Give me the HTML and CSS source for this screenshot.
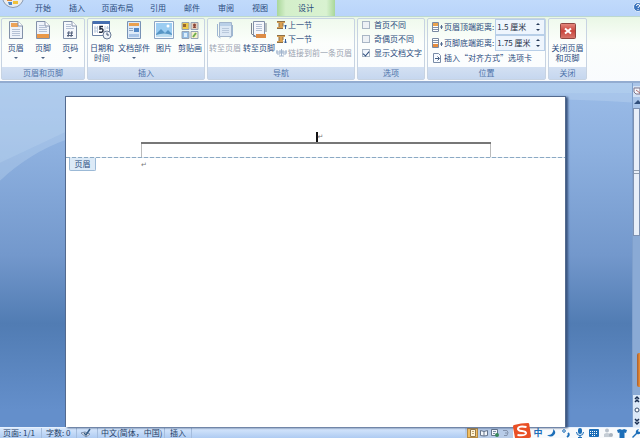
FILE: index.html
```html
<!DOCTYPE html>
<html lang="zh-CN">
<head>
<meta charset="utf-8">
<title>文档</title>
<link rel="stylesheet" href="styles.css">
</head>
<body>
<header class="tabs">
  <button class="office" aria-label="Office">
    <svg width="22" height="22" viewBox="0 0 22 22"><circle cx="11" cy="11" r="10.5" fill="#e9ecef" stroke="#8999b0"/><path d="M5 9l5-1v7H5z" fill="#e38a2e"/><path d="M11 8h5v6h-5z" fill="#79b043"/><path d="M6 16h4v3H7z" fill="#4b86c9"/><path d="M11 15h5v3h-5z" fill="#f0c23b"/></svg>
  </button>
  <nav class="tab-list">
    <button class="tab">开始</button>
    <button class="tab">插入</button>
    <button class="tab tab-wide">页面布局</button>
    <button class="tab">引用</button>
    <button class="tab">邮件</button>
    <button class="tab">审阅</button>
    <button class="tab">视图</button>
    <button class="tab tab-active">设计</button>
  </nav>
  <button class="help" aria-label="帮助">
    <svg width="10" height="10" viewBox="0 0 10 10"><circle cx="5" cy="5" r="4.5" fill="#3c74bd" stroke="#e5effb"/><path d="M3.5 4q0-1.6 1.6-1.6T6.6 4Q6.500 5 5 5.500V6M5 7v1" fill="none" stroke="#fff"/></svg>
  </button>
</header>

<main class="ribbon">
  <section class="group g-header">
    <div class="items">
      <button class="big"><svg width="16" height="20" viewBox="0 0 16 20"><path d="M1.500 1.500H10L14.500 6v12.500h-13z" fill="#eef3fa" stroke="#8291a9"/><path d="M3 3h7v4H3z" fill="#eca45a"/><path d="M10 1.500V6h4.500" fill="#fff" stroke="#8291a9"/><path d="M4 9.500h8M4 11.500h8M4 13.500h8M4 15.500h8" stroke="#b4c1d5"/></svg><span>页眉</span><i class="arrow"></i></button>
      <button class="big"><svg width="16" height="20" viewBox="0 0 16 20"><path d="M1.500 1.500H10L14.500 6v12.500h-13z" fill="#eef3fa" stroke="#8291a9"/><path d="M10 1.500V6h4.500" fill="#fff" stroke="#8291a9"/><path d="M4 5.500h5M4 7.500h8M4 9.500h8M4 11.500h8" stroke="#b4c1d5"/><path d="M2 14h12v4H2z" fill="#e99848"/></svg><span>页脚</span><i class="arrow"></i></button>
      <button class="big"><svg width="16" height="20" viewBox="0 0 16 20"><path d="M1.500 1.500H10L14.500 6v12.500h-13z" fill="#f5f8fc" stroke="#8291a9"/><path d="M10 1.500V6h4.500" fill="#fff" stroke="#8291a9"/><path d="M4 4.500h5M4 6.500h5M4 8.500h8" stroke="#b4c1d5"/><path d="M7 11l-1 6m4-6-1 6M5 13h6M5 15.500h6" stroke="#53617b"/></svg><span>页码</span><i class="arrow"></i></button>
    </div>
    <h2>页眉和页脚</h2>
  </section>

  <section class="group g-insert">
    <div class="items">
      <button class="big"><svg width="20" height="20" viewBox="0 0 20 20"><path d="M.5 1.500h17v14H.5z" fill="#fff" stroke="#6d83a5"/><path d="M1 1h17v3H1z" fill="#466fb0"/><path d="M3 6v7M5.500 6v7M13 6v7M15.500 6v3M2 8h3m9 0h3M2 11h3" stroke="#bccbdd"/><path d="M11 6.500H8V9q3-1 3 1.500T7 12" fill="none" stroke="#202b40" stroke-width="1.500"/><circle cx="15" cy="15" r="4" fill="#eef3f9" stroke="#687a96"/><path d="M15 12.500V15h2" fill="none" stroke="#425474"/></svg><span>日期和<br>时间</span></button>
      <button class="big"><svg width="16" height="20" viewBox="0 0 16 20"><path d="M1.500 1.500h13v17h-13z" fill="#dce9f8" stroke="#7792b5"/><path d="M3 3h10v3H3z" fill="#e9a04e"/><path d="M3 8.500h4M3 10.500h4" stroke="#8ea4c1"/><path d="M8 8h5v4H8z" fill="#5287c5"/><path d="M3 14h10v3H3z" fill="#a8c4e7"/></svg><span>文档部件</span><i class="arrow"></i></button>
      <button class="big"><svg width="20" height="20" viewBox="0 0 20 20"><path d="M.5 1.500h19v17H.5z" fill="#f7fbff" stroke="#8ca4c2"/><path d="M2 3h16v14H2z" fill="#9bcdf2"/><path d="M2 14l5-5 4 4 3-3 4 4v3H2z" fill="#5796c5"/><path d="M2 15q8-3 16 0v2H2z" fill="#bdddf0"/><circle cx="14" cy="6" r="1.500" fill="#fff"/></svg><span>图片</span></button>
      <button class="big"><svg width="18" height="20" viewBox="0 0 18 20"><g stroke="#94a2b5"><path d="M1 2.500h7v7H1z" fill="#ecc94a"/><path d="M10 2.500h7v7h-7z" fill="#e3cfbd"/><path d="M1 11.500h7v7H1z" fill="#92bde5"/><path d="M10 11.500h7v7h-7z" fill="#f5f0cc"/></g><path d="M2 4h3v3H2z" fill="#9a662b"/><path d="M12 8q0-2 1.500-2T15 8z" fill="#8b4436"/><circle cx="13.500" cy="5" r="1.500" fill="#8b4436"/><path d="M3 13h3v4H3z" fill="#dceefb"/><path d="M12 17l3-4" stroke="#6fae4a" stroke-width="2"/></svg><span>剪贴画</span></button>
    </div>
    <h2>插入</h2>
  </section>

  <section class="group g-nav">
    <div class="items">
      <button class="big" disabled><svg width="18" height="20" viewBox="0 0 18 20"><path d="M3.500 2.500h12v14h-12z" fill="#dce8f5" stroke="#a2b5cc"/><path d="M4 3h11v3H4z" fill="#bad0e8"/><path d="M6 8.500h7M6 10.500h7M6 12.500h7" stroke="#b8c8dc"/><path d="M1.500 4v12l3 2M16.500 5v11l-3 2" fill="none" stroke="#9db6d2"/></svg><span>转至页眉</span></button>
      <button class="big"><svg width="18" height="20" viewBox="0 0 18 20"><path d="M3.500 1.500h11v15h-11z" fill="#f5f7fb" stroke="#8291a9"/><path d="M6 4.500h6M6 6.500h6M6 8.500h6M6 10.500h6" stroke="#b4c1d5"/><path d="M6 14h10v4H6z" fill="#dc8b45"/><path d="M1.500 3v11l4 2M16 3v9" fill="none" stroke="#7c8491"/></svg><span>转至页脚</span></button>
      <div class="stack">
        <button class="small"><svg width="11" height="10" viewBox="0 0 11 10"><path d="M1 1h8v2H1zM3 3h4v4H3zM1 7h6v2H1z" fill="#dba252"/><path d="M1 1.500h8M3 3v4M7 3v3M1 8.500h6" stroke="#8c6f46"/><path d="M9.500 9V5M8 6.500L9.500 5 11 6.500" stroke="#315b9a" fill="none"/></svg>上一节</button>
        <button class="small"><svg width="11" height="10" viewBox="0 0 11 10"><path d="M1 1h8v2H1zM3 3h4v4H3zM1 7h6v2H1z" fill="#dba252"/><path d="M1 1.500h8M3 3v4M7 3v3M1 8.500h6" stroke="#8c6f46"/><path d="M9.500 5v4M8 7.500L9.500 9 11 7.500" stroke="#315b9a" fill="none"/></svg>下一节</button>
        <button class="small" disabled><svg width="11" height="10" viewBox="0 0 11 10"><path d="M1 2v4h3V2M7 2v4h3V2M0 4h11M3 8h5M5.500 1v7" fill="none" stroke="#a1b4cd"/></svg>链接到前一条页眉</button>
      </div>
    </div>
    <h2>导航</h2>
  </section>

  <section class="group g-options">
    <div class="items">
      <div class="stack">
        <label class="check"><input type="checkbox">首页不同</label>
        <label class="check"><input type="checkbox">奇偶页不同</label>
        <label class="check"><input type="checkbox" checked>显示文档文字</label>
      </div>
    </div>
    <h2>选项</h2>
  </section>

  <section class="group g-position">
    <div class="items position">
      <div class="measure">
        <svg width="11" height="10" viewBox="0 0 11 10"><path d="M.5.500h6v9h-6z" fill="#fff" stroke="#7889a2"/><path d="M1 1h5v3H1z" fill="#e9a34d"/><path d="M1 5.500h5M1 7.500h5" stroke="#8492a7"/><path d="M9.500 3v4M8 5h3" stroke="#536b91"/></svg>
        <label for="top">页眉顶端距离:</label>
        <div class="spin"><input id="top" type="text" value="1.5 厘米"><span class="steps"><button class="up" aria-label="增加"></button><button class="down" aria-label="减少"></button></span></div>
      </div>
      <div class="measure">
        <svg width="11" height="10" viewBox="0 0 11 10"><path d="M.5.500h6v9h-6z" fill="#fff" stroke="#7889a2"/><path d="M1 6h5v3H1z" fill="#e58c3e"/><path d="M1 2.500h5M1 4.500h5" stroke="#8492a7"/><path d="M9.500 4v4M8 6h3" stroke="#536b91"/></svg>
        <label for="bottom">页脚底端距离:</label>
        <div class="spin"><input id="bottom" type="text" value="1.75 厘米"><span class="steps"><button class="up" aria-label="增加"></button><button class="down" aria-label="减少"></button></span></div>
      </div>
      <button class="small"><svg width="11" height="10" viewBox="0 0 11 10"><path d="M1.500.500h5l2 2v7h-7z" fill="#f8fbff" stroke="#788ba7"/><path d="M3 5.500h4M5.500 3.500l2 2-2 2" fill="none" stroke="#455f83"/></svg>插入“对齐方式”选项卡</button>
    </div>
    <h2>位置</h2>
  </section>

  <section class="group g-close">
    <div class="items">
      <button class="big"><svg width="16" height="20" viewBox="0 0 16 20"><defs><linearGradient id="red" x2="0" y2="1"><stop stop-color="#e58b80"/><stop offset=".5" stop-color="#c9453c"/><stop offset="1" stop-color="#d8796e"/></linearGradient></defs><rect x=".5" y="3.500" width="15" height="15" rx="1" fill="url(#red)" stroke="#8f4741"/><path d="M5 8.500l6 5m0-5l-6 5" stroke="#fff" stroke-width="2"/></svg><span>关闭页眉<br>和页脚</span></button>
    </div>
    <h2>关闭</h2>
  </section>
</main>

<div class="workspace">
  <svg class="swoosh" viewBox="0 0 640 345" preserveAspectRatio="none"><path d="M0 0H640V20Q300 0 66 57 30 70 0 98z" fill="#d3e8f8" opacity=".25"/><path d="M0 0H640V10Q200 10 66 49L0 80z" fill="#d3e8f8" opacity=".18"/></svg>
  <article class="page">
    <div class="page-header">
      <p class="header-line"><span class="caret"></span><span class="mark">↵</span></p>
      <div class="header-frame"></div>
    </div>
    <div class="page-body"><span class="tag">页眉</span><p class="mark first">↵</p></div>
  </article>
  <aside class="scroll">
    <button class="ruler" aria-label="标尺"><svg width="7" height="9" viewBox="0 0 7 9"><path d="M1 1h6v6H3L1 5z" fill="#f5f7fc" stroke="#7d7589"/><path d="M3 3l4 3" stroke="#b16b6b"/></svg></button>
    <button class="scroll-up" aria-label="向上"><svg width="7" height="9" viewBox="0 0 7 9"><path d="M1 6l4-4 2 2v2z" fill="#304e7b"/></svg></button>
    <div class="track"><div class="thumb"><i></i></div><div class="accent"></div></div>
    <div class="jumps">
      <svg width="7" height="32" viewBox="0 0 7 32"><path d="M2 4l2-2 2 2M2 7l2-2 2 2" stroke="#182d4f" stroke-width="1.500" fill="none"/><circle cx="4" cy="15" r="2" fill="#fff" stroke="#344a6a"/><path d="M2 24l2 2 2-2M2 27l2 2 2-2" stroke="#182d4f" stroke-width="1.500" fill="none"/></svg>
    </div>
  </aside>
</div>

<footer class="status">
  <span class="cell c-page">页面: 1/1</span>
  <span class="cell c-words">字数: 0</span>
  <span class="cell c-proof"><svg width="12" height="10" viewBox="0 0 12 10"><path d="M1 5l4-1 5 2-4 3z" fill="#fff" stroke="#778aa7"/><path d="M4 5l2 2 4-6" fill="none" stroke="#335b86" stroke-width="1.500"/></svg></span>
  <span class="cell c-lang">中文(简体，中国)</span>
  <span class="cell c-mode">插入</span>
  <div class="views">
    <button class="view view-on" aria-label="页面视图"><svg width="8" height="8" viewBox="0 0 8 8"><path d="M1.500.500h5v7h-5z" fill="#fff4d8" stroke="#967a4b"/><path d="M3 2.500h2M3 4.500h2" stroke="#c1a46f"/></svg></button>
    <button class="view" aria-label="阅读版式"><svg width="8" height="8" viewBox="0 0 8 8"><path d="M.5 1.500L4 2.500l3.500-1v5L4 7 .5 6.500zM4 2v5" fill="#f4f7fb" stroke="#64748b"/></svg></button>
    <button class="view" aria-label="Web 版式"><svg width="8" height="8" viewBox="0 0 8 8"><path d="M.5.500h6v6h-6z" fill="#f4f7fb" stroke="#64748b"/><circle cx="6" cy="6" r="2" fill="#39875b"/><path d="M2 2.500h3M2 4.500h2" stroke="#7c8da5"/></svg></button>
    <button class="view" aria-label="大纲"><svg width="8" height="8" viewBox="0 0 8 8"><path d="M1 1.500h4l1 2-1 3H2M3 4h3" fill="none" stroke="#8494ad"/></svg></button>
  </div>
  <div class="ime">
    <svg class="sogou" width="18" height="16" viewBox="0 0 18 16"><path d="M1 2Q8 0 15 0q1 0 1.200 1L18 13q0 2-2 2L4 16q-2 0-2-1L0 4Q0 2 1 2z" fill="#e94f25"/><path d="M13.500 4Q6 2.500 5 5.500q-.5 2 4 2.500 4.500.500 4 2.500-1 2.500-8.500 1.500" fill="none" stroke="#fff" stroke-width="2"/></svg>
    <button class="zh">中</button>
    <svg width="10" height="10" viewBox="0 0 10 10"><path d="M6 1q4 3 1 6-3 3-7 0 3 .5 5-1.500T6 1z" fill="#1c6eb8"/></svg>
    <svg width="10" height="10" viewBox="0 0 10 10"><circle cx="3" cy="3" r="1.300" fill="none" stroke="#1c6eb8"/><path d="M7 5q2 2-1 4" fill="none" stroke="#1c6eb8" stroke-width="2"/></svg>
    <svg width="10" height="10" viewBox="0 0 10 10"><rect x="3" width="4" height="6" rx="2" fill="#1c6eb8"/><path d="M1.500 4q0 3.500 3.500 3.500T8.500 4M5 7v3M3 9.500h4" fill="none" stroke="#1c6eb8"/></svg>
    <svg width="10" height="10" viewBox="0 0 10 10"><rect y="1" width="10" height="8" rx="1" fill="#1c6eb8"/><path d="M1 3.500h8M1 5.500h8M3 7.500h4" stroke="#fff" stroke-dasharray="1 1"/></svg>
    <svg width="10" height="10" viewBox="0 0 10 10"><circle cx="4" cy="2.500" r="2" fill="#b9c2cc"/><path d="M1 9V6q3-2 6 0v3z" fill="#c5cdd5"/><circle cx="8" cy="7" r="2" fill="#a9b3bf"/></svg>
    <svg width="10" height="10" viewBox="0 0 10 10"><path d="M0 2l3-1q2 1.500 4 0l3 1-1 3-1.500-.5V10h-5V4.500L1 5z" fill="#1c6eb8"/></svg>
    <svg width="10" height="10" viewBox="0 0 10 10"><path d="M1 9l4-4q-1-3 3-4L7 3l1 1 2-1q0 4-4 3L2 10z" fill="#1c6eb8"/></svg>
  </div>
</footer>
</body>
</html>
```

FILE: styles.css
```css
* { box-sizing: border-box; }
html, body { height: 100%; }
body {
  margin: 0;
  display: flex;
  flex-direction: column;
  overflow: hidden;
  font: 8px/10px "Noto Sans CJK SC", sans-serif;
  color: #294a7c;
}
button, input { font: inherit; color: inherit; }
button { border: 0; padding: 0; margin: 0; background: none; white-space: nowrap; }
h2, p { margin: 0; font: inherit; }
svg { display: block; flex: none; }

/* Tabs */
.tabs {
  flex: none;
  display: flex;
  height: 16px;
  background: linear-gradient(#c1dafb, #b9d4fa);
}
.office { width: 26px; height: 9px; display: flex; align-items: flex-end; justify-content: center; z-index: 1; }
.office svg { margin-bottom: 1px; }
.tab-list { display: flex; flex: 1; }
.tab { width: 34px; padding-bottom: 1px; }
.tab-wide { width: 47px; }
.tab-list .tab-active {
  width: 58px;
  background: linear-gradient(90deg, #a9d79a, #d4efca 15%, #d9f2d1 85%, #a9d79a);
}
.help { align-self: flex-start; margin-right: -3px; padding-top: 2px; }

/* Ribbon */
.ribbon {
  flex: none;
  display: flex;
  gap: 2px;
  height: 67px;
  padding: 1px;
  border-top: 1px solid #bcd8cf;
  border-bottom: 2px solid #93acd0;
  background: linear-gradient(#e9f7e5, #fbfefb 40%, #f9fbfe);
}
.group {
  display: flex;
  flex-direction: column;
  border: 1px solid #c7d3e2;
  border-radius: 2px;
  background: linear-gradient(#f0faed, #fcfefc 40%, #fafcff);
}
.group h2 {
  height: 12px;
  text-align: center;
  line-height: 11px;
  color: #4d73aa;
  background: linear-gradient(#d3e0f2, #c6d7ef);
}
.g-header { width: 84px; }
.g-insert { width: 118px; }
.g-nav { width: 148px; }
.g-options { width: 68px; }
.g-position { width: 119px; }
.g-close { width: 39px; }
.items { flex: 1; display: flex; align-items: flex-start; justify-content: center; }
.big {
  flex: 1 0 auto;
  display: flex;
  flex-direction: column;
  align-items: center;
  padding-top: 1px;
}
.big span { padding-top: 3px; line-height: 10px; }
.arrow {
  margin-top: 4px;
  border: 2px solid transparent;
  border-top-color: #4b6182;
  border-bottom: 0;
}
.big:disabled, .small:disabled { color: #9ba4b2; }
.stack { flex: none; display: flex; flex-direction: column; gap: 4px; padding-top: 1px; }
.g-nav .stack { width: 78px; }
.small { display: flex; align-items: center; gap: 1px; height: 10px; }
.g-options .items { justify-content: flex-start; padding-left: 4px; }
.check { display: flex; align-items: center; gap: 4px; height: 10px; white-space: nowrap; }
.check input {
  appearance: none;
  width: 8px;
  height: 8px;
  margin: 0;
  border: 1px solid #a9b6c5;
  background: #edf1f5;
}
.check input:checked {
  background: linear-gradient(135deg, #e9f1fb, #fff);
  display: grid;
  place-items: center;
}
.check input:checked::before {
  content: "";
  width: 3px;
  height: 5px;
  border: solid #294a7c;
  border-width: 0 1px 1px 0;
  transform: rotate(40deg);
}
.items.position { flex-direction: column; justify-content: flex-start; align-items: stretch; padding: 0 3px 0 4px; }
.measure { display: flex; align-items: center; gap: 1px; height: 16px; }
.measure label { flex: 1; white-space: nowrap; }
.spin {
  display: flex;
  width: 50px;
  height: 16px;
  border: 1px solid #b8cfe8;
  background: #eef5fd;
}
.spin input { flex: 1; min-width: 0; padding: 0 1px; border: 0; background: none; color: #1d2c44; outline: 0; }
.steps { display: flex; flex-direction: column; justify-content: center; gap: 4px; width: 8px; }
.up, .down { width: 4px; height: 2px; border: 2px solid transparent; }
.up { border-top: 0; border-bottom-color: #263a59; }
.down { border-bottom: 0; border-top-color: #263a59; }
.position .small { margin-top: 2px; }

/* Document */
.workspace {
  flex: 1;
  min-height: 0;
  display: flex;
  position: relative;
  padding-left: 65px;
  background: linear-gradient(#9bbce8, #8db0df 20%, #7398cc 50%, #517cb3 70%, #648fcb 95%);
}
.swoosh { position: absolute; inset: 0; width: 100%; height: 100%; }
.page {
  position: relative;
  flex: 1;
  margin: 13px 66px 0 0;
  border: 1px solid #536a8e;
  border-bottom: 0;
  background: #fff;
  box-shadow: 2px 1px 2px #3b5680;
}
.page-header {
  height: 61px;
  padding: 35px 74px 0 75px;
  background: repeating-linear-gradient(90deg, #8ba9c4 0 4px, #dce7f0 4px 6px) bottom / 100% 1px no-repeat;
}
.header-line { display: flex; justify-content: center; height: 12px; padding-left: 7px; border-bottom: 2px solid #777; }
.caret { width: 2px; height: 10px; background: #111; }
.mark { font: 7px/10px "DejaVu Sans", sans-serif; color: #777; }
.header-frame { height: 13px; border: solid #bbb; border-width: 0 1px; }
.page-body { display: flex; align-items: flex-start; padding-left: 3px; }
.tag {
  width: 27px;
  height: 13px;
  border: 1px solid #9bb9d6;
  border-top: 0;
  border-radius: 0 0 2px 2px;
  background: #dceaf7;
  text-align: center;
  line-height: 12px;
}
.first { padding: 2px 0 0 45px; }
.scroll {
  position: relative;
  display: flex;
  flex-direction: column;
  width: 8px;
  border-left: 1px solid #7e9fcc;
  background: #aac5e9;
}
.ruler, .scroll-up { height: 11px; }
.ruler { margin-top: 3px; background: #d2e1f5; }
.track { flex: 1; display: flex; flex-direction: column; justify-content: space-between; background: #8aaad5; }
.thumb { display: grid; align-items: center; height: 128px; border: 1px solid #7d91b2; background: #e8eff9; }
.thumb i { height: 4px; border: solid #929eae; border-width: 1px 0; }
.accent { height: 34px; margin: 0 0 8px 4px; border-radius: 2px 0 0 2px; background: linear-gradient(90deg, #a55d32, #f19335); }
.jumps { height: 32px; background: #dbe8f8; }

/* Status bar */
.status {
  flex: none;
  display: flex;
  align-items: center;
  height: 11px;
  border-top: 1px solid #e6f0fd;
  background: linear-gradient(#d8e8fc, #aecbf2);
  color: #263f66;
}
.cell { height: 10px; padding-left: 3px; border-right: 1px solid #a5bddd; white-space: nowrap; }
.c-page { width: 42px; }
.c-words { width: 35px; padding-left: 4px; }
.c-proof { width: 21px; }
.c-lang { width: 67px; }
.c-mode { width: 27px; padding-left: 5px; }
.views { display: flex; margin-left: auto; padding: 0 2px; background: #b8cce8; }
.view { display: grid; place-items: center; width: 11px; height: 10px; }
.view-on { background: #f1be62; outline: 1px solid #b68a42; outline-offset: -1px; }
.ime { display: flex; align-items: center; gap: 4px; height: 10px; margin-right: -1px; background: #f8fafc; }
.sogou { position: relative; z-index: 1; margin: -6px -2px -2px 0; }
.zh { width: 10px; height: 10px; font-size: 9px; font-weight: 700; color: #1c6eb8; }
```
